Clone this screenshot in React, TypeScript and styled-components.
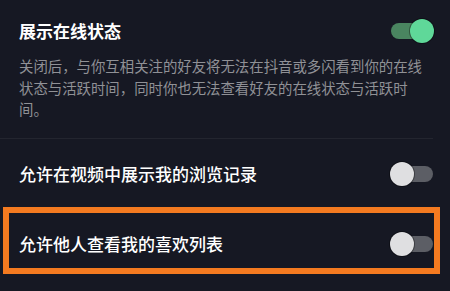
import React from "react";
import styled, { createGlobalStyle } from "styled-components";

const Global = createGlobalStyle`
  html, body { margin: 0; padding: 0; background: #161823; }
  body { font-family: "Noto Sans CJK SC", "Noto Sans", sans-serif; }
  #root { width: 450px; height: 291px; overflow: hidden; }
`;

const Page = styled.div`
  width: 450px;
  height: 291px;
  background: #161823;
  display: flex;
  flex-direction: column;
`;

const Section = styled.div`
  padding: 19px 0 18px 19px;
  border-bottom: 1px solid #23252f;
  margin-right: 17px;
  display: flex;
  flex-direction: column;
  gap: 12px;
`;

const Header = styled.div`
  display: flex;
  align-items: center;
  justify-content: space-between;
  height: 24px;
`;

const Title = styled.div`
  color: #ffffff;
  font-size: 17px;
  font-weight: 700;
  line-height: 24px;
`;

const Desc = styled.div`
  color: #909196;
  font-size: 14.4px;
  line-height: 21.5px;
  width: 412px;
`;

const Row = styled.div`
  position: relative;
  height: 70px;
  display: flex;
  align-items: center;
  justify-content: space-between;
  padding: 0 17px 0 19px;
  flex-shrink: 0;
`;

const Label = styled.div`
  color: #ffffff;
  font-size: 17px;
  font-weight: 500;
  line-height: 24px;
`;

const Track = styled.div<{ $on: boolean }>`
  position: relative;
  width: 42px;
  height: 16px;
  border-radius: 8px;
  background: ${(p) => (p.$on ? "#4a8560" : "#5c5e65")};
  flex-shrink: 0;
`;

const Knob = styled.div<{ $on: boolean }>`
  position: absolute;
  top: -4px;
  ${(p) => (p.$on ? "right: -1px;" : "left: -1px;")}
  width: 24px;
  height: 24px;
  border-radius: 50%;
  background: ${(p) => (p.$on ? "#5fd899" : "#dfdfe1")};
  box-shadow: 0 0 0 1px rgba(0, 0, 0, 0.35);
`;

const Highlight = styled.div`
  position: absolute;
  top: -2px;
  left: 3px;
  width: 437px;
  height: 67px;
  border: 6px solid #f47a20;
  box-sizing: border-box;
  pointer-events: none;
`;

const Toggle = ({ on }: { on: boolean }) => (
  <Track $on={on}>
    <Knob $on={on} />
  </Track>
);

export default function App() {
  return (
    <>
      <Global />
      <Page>
        <Section>
          <Header>
            <Title>展示在线状态</Title>
            <Toggle on />
          </Header>
          <Desc>
            关闭后，与你互相关注的好友将无法在抖音或多闪看到你的在线状态与活跃时间，同时你也无法查看好友的在线状态与活跃时间。
          </Desc>
        </Section>
        <Row>
          <Label>允许在视频中展示我的浏览记录</Label>
          <Toggle on={false} />
        </Row>
        <Row>
          <Label>允许他人查看我的喜欢列表</Label>
          <Toggle on={false} />
          <Highlight />
        </Row>
      </Page>
    </>
  );
}
